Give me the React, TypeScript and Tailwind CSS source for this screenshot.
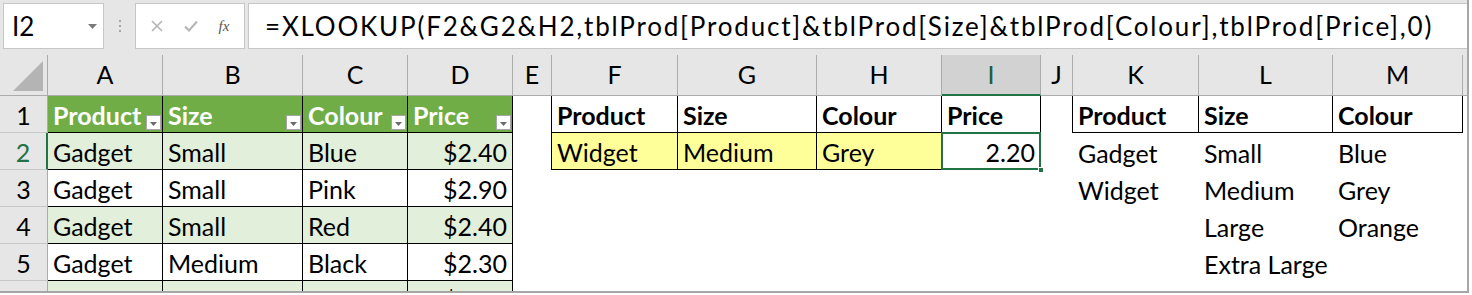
import React from 'react';

const font = { fontFamily: 'Lato, "Noto Sans", sans-serif' };

// column widths: row header, A..M, filler
const colW = [
  'w-[48px]', 'w-[115px]', 'w-[140px]', 'w-[105px]', 'w-[105px]', 'w-[39px]', 'w-[126px]',
  'w-[139px]', 'w-[125px]', 'w-[99px]', 'w-[32px]', 'w-[126px]', 'w-[134px]', 'w-[130px]', 'flex-1',
];
const letters = ['A', 'B', 'C', 'D', 'E', 'F', 'G', 'H', 'I', 'J', 'K', 'L', 'M'];

type C = { t?: string; cls?: string; right?: boolean; filter?: boolean; sel?: boolean };

const FilterBtn = () => (
  <span className="absolute right-[1px] bottom-[2px] w-[15px] h-[15px] bg-white border border-[#a6a6a6] flex items-end justify-center pb-[3px]">
    <svg width="7" height="4" viewBox="0 0 7 4"><path d="M0 0h7L3.5 4z" fill="#6b6b6b" /></svg>
  </span>
);

const tblHead = 'bg-[#70ad47] text-white font-bold border-r border-b border-black';
const band = 'bg-[#e2efda] border-r border-b border-black';
const plain = 'bg-white border-r border-b border-black';
const boxed = 'border-r border-b border-black';
const yellow = 'bg-[#ffff99] border-r border-b border-black';

const rows: C[][] = [
  [
    { t: 'Product', cls: tblHead, filter: true }, { t: 'Size', cls: tblHead, filter: true },
    { t: 'Colour', cls: tblHead, filter: true }, { t: 'Price', cls: tblHead, filter: true },
    { cls: 'border-r border-black' },
    { t: 'Product', cls: 'font-bold ' + boxed }, { t: 'Size', cls: 'font-bold ' + boxed },
    { t: 'Colour', cls: 'font-bold ' + boxed }, { t: 'Price', cls: 'font-bold ' + boxed },
    { cls: 'border-r border-black' },
    { t: 'Product', cls: 'font-bold ' + boxed }, { t: 'Size', cls: 'font-bold ' + boxed },
    { t: 'Colour', cls: 'font-bold ' + boxed },
  ],
  [
    { t: 'Gadget', cls: band }, { t: 'Small', cls: band }, { t: 'Blue', cls: band }, { t: '$2.40', cls: band, right: true },
    { cls: 'border-r border-black' },
    { t: 'Widget', cls: yellow }, { t: 'Medium', cls: yellow }, { t: 'Grey', cls: yellow },
    { t: '2.20', cls: boxed, right: true, sel: true },
    {}, { t: 'Gadget' }, { t: 'Small' }, { t: 'Blue' },
  ],
  [
    { t: 'Gadget', cls: plain }, { t: 'Small', cls: plain }, { t: 'Pink', cls: plain }, { t: '$2.90', cls: plain, right: true },
    {}, {}, {}, {}, {}, {}, { t: 'Widget' }, { t: 'Medium' }, { t: 'Grey' },
  ],
  [
    { t: 'Gadget', cls: band }, { t: 'Small', cls: band }, { t: 'Red', cls: band }, { t: '$2.40', cls: band, right: true },
    {}, {}, {}, {}, {}, {}, {}, { t: 'Large' }, { t: 'Orange' },
  ],
  [
    { t: 'Gadget', cls: plain }, { t: 'Medium', cls: plain }, { t: 'Black', cls: plain }, { t: '$2.30', cls: plain, right: true },
    {}, {}, {}, {}, {}, {}, {}, { t: 'Extra Large' }, {},
  ],
  [
    { t: 'Gadget', cls: band }, { t: 'Medium', cls: band }, { t: 'Grey', cls: band }, { t: '$2.30', cls: band, right: true },
    {}, {}, {}, {}, {}, {}, {}, {}, {},
  ],
];

export default function App() {
  return (
    <div className="w-[1469px] h-[293px] overflow-hidden bg-white border-r-2 border-b-2 border-[#a6a6a6] text-black" style={font}>
      {/* formula bar */}
      <div className="h-[55px] bg-[#e6e6e6] flex items-start pt-[3px] pl-[3px] gap-0">
        <div className="w-[101px] h-[46px] bg-white border border-[#c6c6c6] flex items-center justify-between pl-[8px] pr-[6px]">
          <span className="text-[26px] leading-none">I2</span>
          <svg width="9" height="5" viewBox="0 0 9 5"><path d="M0 0h9L4.5 5z" fill="#7a7a7a" /></svg>
        </div>
        <div className="w-[31px] h-[46px] flex flex-col items-center justify-center gap-[3px]">
          <span className="w-[2px] h-[2px] bg-[#a6a6a6]" />
          <span className="w-[2px] h-[2px] bg-[#a6a6a6]" />
          <span className="w-[2px] h-[2px] bg-[#a6a6a6]" />
        </div>
        <div className="w-[110px] h-[46px] bg-white border border-[#c6c6c6] flex items-center justify-around px-[4px]">
          <svg width="12" height="12" viewBox="0 0 12 12"><path d="M1 1l10 10M11 1L1 11" stroke="#b4b4b4" strokeWidth="1.6" /></svg>
          <svg width="14" height="12" viewBox="0 0 14 12"><path d="M1 6.5l4 4L13 1.5" stroke="#b4b4b4" strokeWidth="2" fill="none" /></svg>
          <span className="text-[15px] italic text-[#555]" style={{ fontFamily: '"Liberation Serif", serif' }}>fx</span>
        </div>
        <div className="flex-1 ml-[3px] h-[46px] bg-white border border-[#c6c6c6] border-r-0 flex items-center pl-[16px]">
          <span className="text-[26px] leading-none whitespace-nowrap tracking-[1.8px]">
            =XLOOKUP(F2&amp;G2&amp;H2,tblProd[Product]&amp;tblProd[Size]&amp;tblProd[Colour],tblProd[Price],0)
          </span>
        </div>
      </div>

      {/* column headers */}
      <div className="flex h-[41px]">
        <div className={`${colW[0]} shrink-0 bg-[#e6e6e6] border-r border-b border-[#ababab] flex items-end justify-end p-[4px]`}>
          <svg width="30" height="30" viewBox="0 0 30 30"><path d="M30 0V30H0z" fill="#b4b4b4" /></svg>
        </div>
        {letters.map((l, i) =>
          l === 'I' ? (
            <div key={l} className={`${colW[i + 1]} shrink-0 bg-[#d2d2d2] border-r border-[#ababab] border-b-2 border-b-[#217346] text-[#1e5e3a] flex items-center justify-center text-[25px]`}>{l}</div>
          ) : (
            <div key={l} className={`${colW[i + 1]} shrink-0 bg-[#e6e6e6] border-r border-b border-[#ababab] flex items-center justify-center text-[25px]`}>{l}</div>
          )
        )}
        <div className="flex-1 bg-[#e6e6e6] border-b border-[#ababab]" />
      </div>

      {/* data rows */}
      {rows.map((r, ri) => (
        <div key={ri} className="flex h-[37px]">
          <div className={`${colW[0]} shrink-0 bg-[#e6e6e6] border-b border-[#c6c6c6] flex items-end justify-center text-[25px] leading-[33px] ${ri === 1 ? 'border-r-2 border-r-[#217346] text-[#217346]' : 'border-r border-r-[#ababab]'}`}>
            {ri + 1}
          </div>
          {r.map((c, ci) => (
            <div
              key={ci}
              className={`${colW[ci + 1]} shrink-0 relative flex items-end text-[25px] leading-[33px] whitespace-nowrap ${c.right ? 'justify-end pr-[5px]' : 'pl-[5px]'} ${c.cls ?? ''}`}
            >
              {c.t}
              {c.filter && <FilterBtn />}
              {c.sel && (
                <>
                  <span className="absolute -left-[1px] -top-[1px] right-[-1px] bottom-[-1px] border-2 border-[#217346]" />
                  <span className="absolute -right-[4px] -bottom-[4px] w-[6px] h-[6px] bg-[#217346] border border-white" />
                </>
              )}
            </div>
          ))}
          <div className="flex-1" />
        </div>
      ))}
    </div>
  );
}
